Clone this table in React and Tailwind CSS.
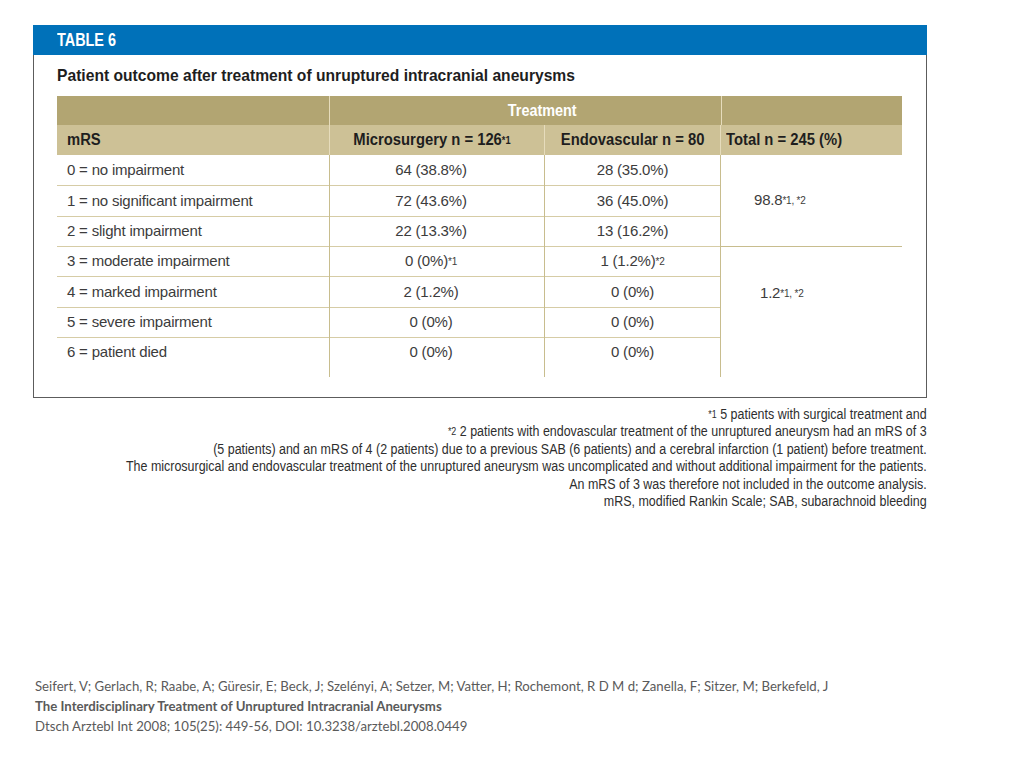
import React from 'react';

const sans = "font-['Liberation_Sans','Arial',sans-serif]";

// mRS rows: label, microsurgery, endovascular, note marks, row height
const rows = [
  { label: '0 = no impairment', micro: '64 (38.8%)', endo: '28 (35.0%)', h: 'h-[30px]' },
  { label: '1 = no significant impairment', micro: '72 (43.6%)', endo: '36 (45.0%)', h: 'h-[31px]' },
  { label: '2 = slight impairment', micro: '22 (13.3%)', endo: '13 (16.2%)', h: 'h-[30px]' },
  { label: '3 = moderate impairment', micro: '0 (0%)', microSup: '*1', endo: '1 (1.2%)', endoSup: '*2', h: 'h-[30px]' },
  { label: '4 = marked impairment', micro: '2 (1.2%)', endo: '0 (0%)', h: 'h-[31px]' },
  { label: '5 = severe impairment', micro: '0 (0%)', endo: '0 (0%)', h: 'h-[30px]' },
  { label: '6 = patient died', micro: '0 (0%)', endo: '0 (0%)', h: 'h-[30px]' },
];

const Sup = ({ children }) => (
  <sup className="text-[10px] relative -top-[1px]">{children}</sup>
);

const Cell = ({ row, i, children, className = '' }) => (
  <div className={`${row.h} flex items-center ${i > 0 ? 'border-t border-[#d6cca6]' : ''} ${className}`}>
    {children}
  </div>
);

export default function App() {
  return (
    <div className={`w-[1024px] h-[768px] bg-white relative overflow-hidden ${sans}`}>
      <div className="ml-[33px] mt-[25px] w-[894px]">
        {/* blue title bar */}
        <div className="h-[30px] bg-[#0071b9] flex items-center pl-[24px]">
          <span className="inline-block origin-left scale-x-[0.8] text-white font-bold text-[18px] whitespace-nowrap">TABLE 6</span>
        </div>

        <div className="h-[343px] border-l border-r border-b border-[#5c5c5c] pl-[23px] pt-[11px]">
          <div className="h-[30px] leading-[20px] text-[#1e1e1e] font-bold text-[17px] whitespace-nowrap">
            <span className="inline-block origin-left scale-x-[0.92]">
              Patient outcome after treatment of unruptured intracranial aneurysms
            </span>
          </div>

          <div className="w-[845px]">
            {/* header */}
            <div className="flex bg-[#b2a572] h-[29px]">
              <div className="w-[273px] border-r border-[#e6dcbc]" />
              <div className="w-[391px] flex items-center justify-center pl-[34px] text-white font-bold text-[16px]">
                <span className="inline-block scale-x-[0.9]">Treatment</span>
              </div>
              <div className="w-[181px] border-l border-[#e6dcbc]" />
            </div>
            <div className="flex bg-[#cdc196] h-[30px] text-[#1e1e1e] font-bold text-[16px] whitespace-nowrap">
              <div className="w-[273px] border-r border-[#e6dcbc] flex items-center pl-[10px]">
                <span className="inline-block origin-left scale-x-[0.925]">mRS</span>
              </div>
              <div className="w-[215px] border-r border-[#e6dcbc] flex items-center justify-center pr-[10px]">
                <span className="inline-block scale-x-[0.925]">Microsurgery n = 126<Sup>*1</Sup></span>
              </div>
              <div className="w-[176px] border-r border-[#e6dcbc] flex items-center justify-center">
                <span className="inline-block scale-x-[0.925]">Endovascular n = 80</span>
              </div>
              <div className="w-[181px] flex items-center pl-[5px]">
                <span className="inline-block origin-left scale-x-[0.925]">Total n = 245 (%)</span>
              </div>
            </div>

            {/* body */}
            <div className="flex text-[15px] tracking-[-0.2px] text-[#3c3c3c]">
              <div className="w-[273px] border-r border-[#c8bd8e] pb-[10px]">
                {rows.map((r, i) => (
                  <Cell key={i} row={r} i={i} className="pl-[10px]">{r.label}</Cell>
                ))}
              </div>
              <div className="w-[215px] border-r border-[#c8bd8e] pb-[10px]">
                {rows.map((r, i) => (
                  <Cell key={i} row={r} i={i} className="justify-center pr-[12px]">
                    <span>{r.micro}{r.microSup && <Sup>{r.microSup}</Sup>}</span>
                  </Cell>
                ))}
              </div>
              <div className="w-[176px] border-r border-[#c8bd8e] pb-[10px]">
                {rows.map((r, i) => (
                  <Cell key={i} row={r} i={i} className="justify-center">
                    <span>{r.endo}{r.endoSup && <Sup>{r.endoSup}</Sup>}</span>
                  </Cell>
                ))}
              </div>
              <div className="w-[181px]">
                <div className="h-[91px] flex items-center pl-[33px]">
                  <span>98.8<Sup>*1, *2</Sup></span>
                </div>
                <div className="h-[121px] border-t border-[#c8bd8e] flex items-start pt-[35px] pl-[39px]">
                  <span>1.2<Sup>*1, *2</Sup></span>
                </div>
              </div>
            </div>
          </div>
        </div>

        {/* footnotes */}
        <div className="mt-[8px] flex justify-end">
          <div className="shrink-0 origin-right scale-x-[0.89] text-right text-[14px] leading-[17.4px] text-[#2e2e2e] whitespace-nowrap">
            <div><Sup>*1</Sup> 5 patients with surgical treatment and</div>
            <div><Sup>*2</Sup> 2 patients with endovascular treatment of the unruptured aneurysm had an mRS of 3</div>
            <div>(5 patients) and an mRS of 4 (2 patients) due to a previous SAB (6 patients) and a cerebral infarction (1 patient) before treatment.</div>
            <div>The microsurgical and endovascular treatment of the unruptured aneurysm was uncomplicated and without additional impairment for the patients.</div>
            <div>An mRS of 3 was therefore not included in the outcome analysis.</div>
            <div>mRS, modified Rankin Scale; SAB, subarachnoid bleeding</div>
          </div>
        </div>
      </div>

      {/* citation */}
      <div className="absolute left-[35px] top-[676px] text-[13.2px] leading-[20px] text-[#5a5a5a] font-['Lato','Open_Sans',sans-serif]">
        <div>Seifert, V; Gerlach, R; Raabe, A; Güresir, E; Beck, J; Szelényi, A; Setzer, M; Vatter, H; Rochemont, R D M d; Zanella, F; Sitzer, M; Berkefeld, J</div>
        <div className="font-bold">The Interdisciplinary Treatment of Unruptured Intracranial Aneurysms</div>
        <div>Dtsch Arztebl Int 2008; 105(25): 449-56, DOI: 10.3238/arztebl.2008.0449</div>
      </div>
    </div>
  );
}
